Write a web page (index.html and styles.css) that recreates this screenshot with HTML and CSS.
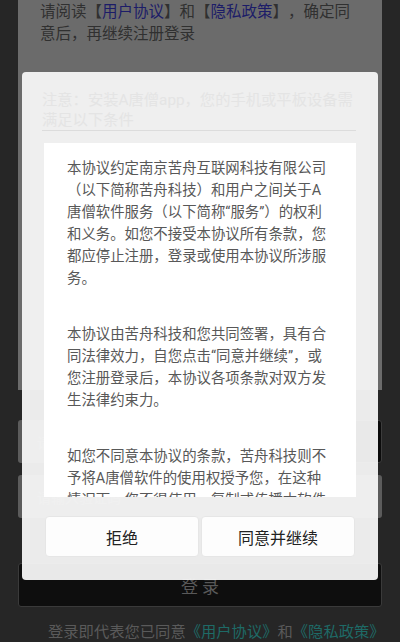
FILE: index.html
```html
<!DOCTYPE html>
<html lang="zh-CN">
<head>
<meta charset="utf-8">
<title>注册登录</title>
<link rel="stylesheet" href="styles.css">
</head>
<body>
<div class="page">
  <div class="panel">
    <p class="notice">请阅读【<span class="link">用户协议</span>】和【<span class="link">隐私政策</span>】，确定同意后，再继续注册登录</p>
  </div>
  <div class="form">
    <div class="row">
      <div class="input">请输入手机号</div>
      <div class="code-btn">获取验证码</div>
    </div>
    <div class="input">请输入验证码</div>
    <div class="login">登录</div>
    <p class="agree">登录即代表您已同意<span class="link2">《用户协议》</span>和<span class="link2">《隐私政策》</span></p>
  </div>

  <div class="modal">
    <div class="modal-head">注意：安装A唐僧app，您的手机或平板设备需<br>满足以下条件</div>
    <div class="modal-body">
      <p>本协议约定南京苦舟互联网科技有限公司<br>（以下简称苦舟科技）和用户之间关于A<br>唐僧软件服务（以下简称“服务”）的权利<br>和义务。如您不接受本协议所有条款，您<br>都应停止注册，登录或使用本协议所涉服<br>务。</p>
      <p>本协议由苦舟科技和您共同签署，具有合<br>同法律效力，自您点击“同意并继续”，或<br>您注册登录后，本协议各项条款对双方发<br>生法律约束力。</p>
      <p>如您不同意本协议的条款，苦舟科技则不<br>予将A唐僧软件的使用权授予您，在这种<br>情况下，您不得使用、复制或传播本软件</p>
    </div>
    <div class="modal-actions">
      <div class="btn">拒绝</div>
      <div class="btn">同意并继续</div>
    </div>
  </div>
</div>
</body>
</html>
```
FILE: styles.css
```css
html, body {
  margin: 0;
  padding: 0;
  background: #262626;
}
body {
  font-family: Roboto, "Noto Sans CJK SC", sans-serif;
  text-spacing-trim: space-all;
}
.page {
  position: relative;
  width: 400px;
  height: 642px;
  overflow: hidden;
}
.panel {
  margin: 0 18px;
  height: 390px;
  background: #6b6b6b;
  padding: 1px 26px 0 22px;
  box-sizing: border-box;
}
.notice {
  margin: 0;
  font-size: 15.5px;
  line-height: 22px;
  color: #303030;
}
.link {
  color: #1c1c68;
}
.form {
  margin: 30px 18px 0;
  display: flex;
  flex-direction: column;
}
.row {
  display: flex;
  gap: 8px;
  margin-bottom: 12px;
}
.row .input {
  flex: 1;
}
.input {
  height: 43px;
  background: #5c5c5c;
  border-radius: 3px;
  padding-left: 19px;
  display: flex;
  align-items: center;
  font-size: 14px;
  color: #7a7a7a;
}
.code-btn {
  width: 120px;
  height: 43px;
  box-sizing: border-box;
  background: #0b0b0b;
  border: 1px solid #3c3c3c;
  border-radius: 3px;
  display: flex;
  align-items: center;
  justify-content: center;
  font-size: 14px;
  color: #555;
}
.login {
  margin-top: 45px;
  height: 44px;
  box-sizing: border-box;
  background: #0e0e0e;
  border: 1px solid #3a3a3a;
  border-radius: 3px;
  display: flex;
  align-items: center;
  justify-content: center;
  font-size: 17px;
  letter-spacing: 4px;
  padding-left: 4px;
  color: #595959;
}
.agree {
  margin: 14px 0 0 30px;
  font-size: 15.3px;
  line-height: 22px;
  color: #5a5a5a;
  white-space: nowrap;
}
.link2 {
  color: #1e6a66;
}

.modal {
  position: absolute;
  left: 22px;
  top: 72px;
  width: 356px;
  height: 508px;
  box-sizing: border-box;
  background: rgba(248, 248, 248, 0.94);
  border-radius: 4px;
  padding: 18px 22px 23px;
  display: flex;
  flex-direction: column;
}
.modal-head {
  margin-left: -2px;
  height: 40px;
  font-size: 15.3px;
  line-height: 20px;
  color: #e4e4e4;
  border-bottom: 1px solid #dcdcdc;
  white-space: nowrap;
}
.modal-body {
  margin-top: 12px;
  height: 354px;
  background: #ffffff;
  overflow: hidden;
  padding: 15px 0 0 23px;
  box-sizing: border-box;
  font-size: 14.4px;
  line-height: 22px;
  color: #585858;
  white-space: nowrap;
}
.modal-body p {
  margin: 0 0 34px;
}
.modal-actions {
  margin: 19px 1px 0;
  display: grid;
  grid-template-columns: 1fr 1fr;
  gap: 2px;
}
.btn {
  height: 41px;
  box-sizing: border-box;
  background: #fdfdfd;
  border: 1px solid #e6e6e6;
  border-radius: 4px;
  display: flex;
  align-items: center;
  justify-content: center;
  font-size: 16px;
  color: #222222;
}
```
